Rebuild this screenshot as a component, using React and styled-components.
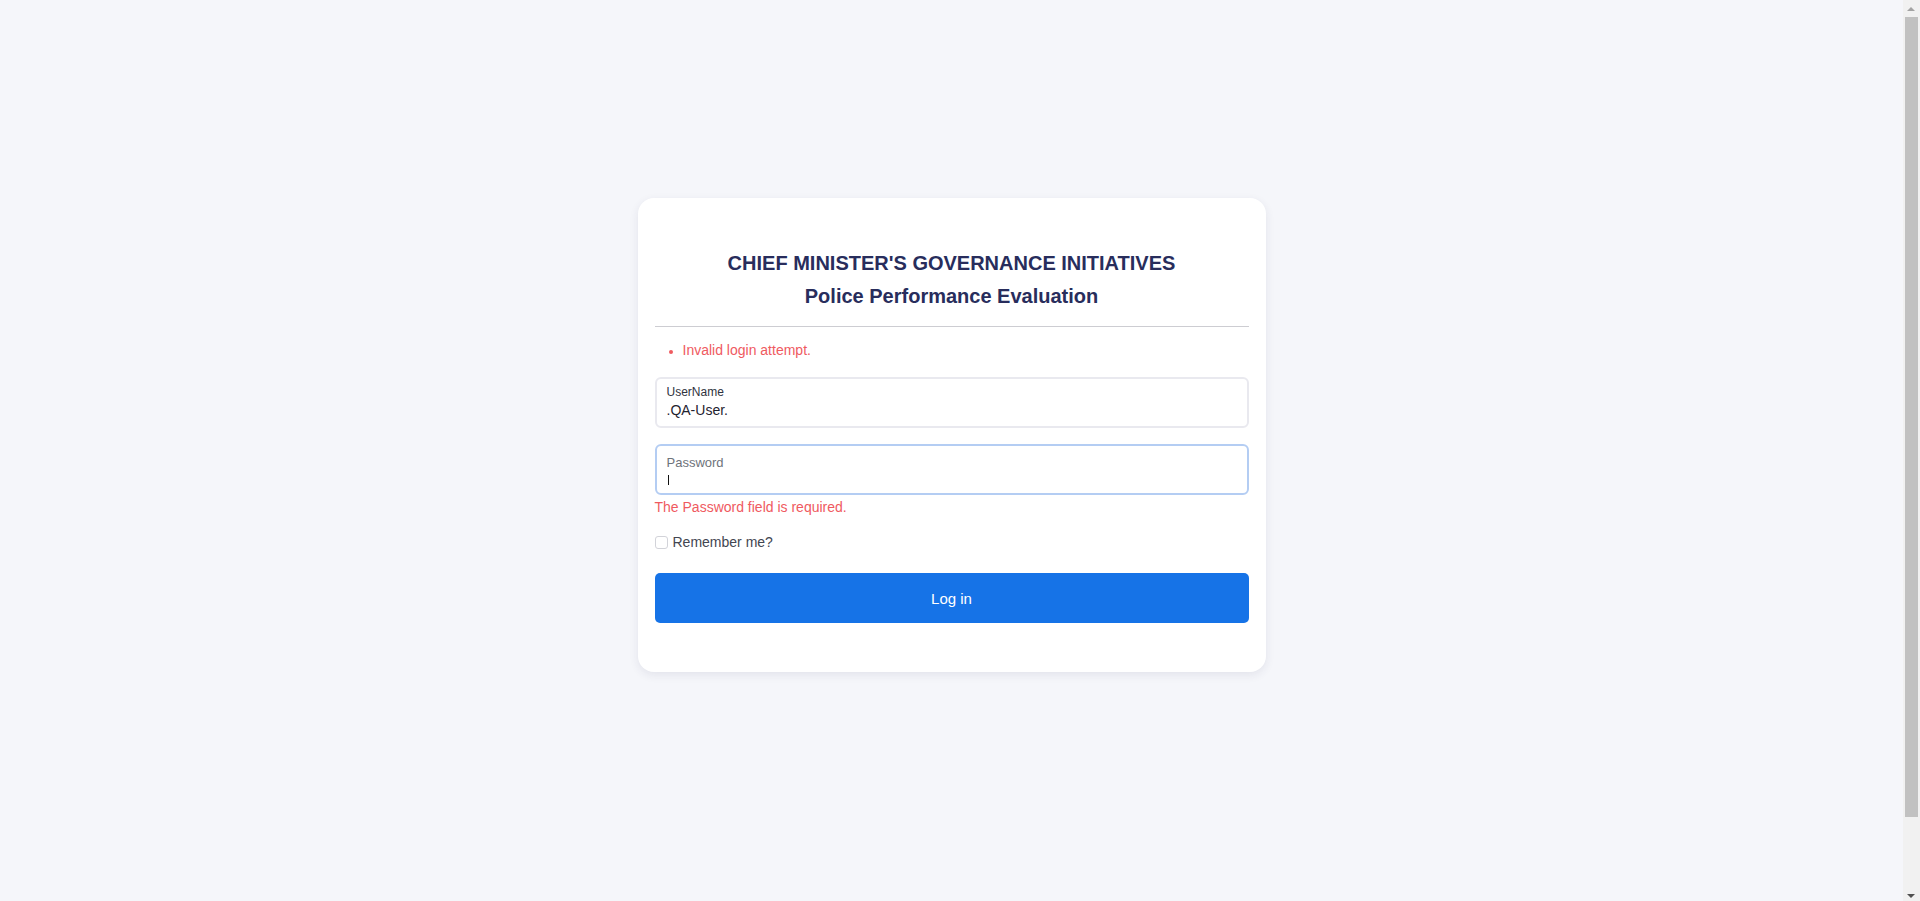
import React from "react";
import styled, { createGlobalStyle } from "styled-components";

const GlobalStyle = createGlobalStyle`
  html, body {
    margin: 0;
    padding: 0;
    background: #f5f6fa;
    font-family: "Liberation Sans", Arial, sans-serif;
    overflow: hidden;
  }
  * { box-sizing: border-box; }
`;

const Page = styled.div`
  display: flex;
  justify-content: center;
  align-items: flex-start;
  min-height: 100vh;
  padding: 198px 17px 0 0;
`;

const Card = styled.form`
  width: 628px;
  background: #ffffff;
  border-radius: 16px;
  box-shadow: 0 3px 10px rgba(40, 45, 90, 0.09);
  padding: 53px 17px 49px;
  display: flex;
  flex-direction: column;
`;

const Header = styled.header`
  text-align: center;
  color: #282d5c;
  padding-bottom: 18px;
  border-bottom: 1px solid #cdcdd2;
`;

const Title = styled.h1`
  margin: 0;
  font-size: 20px;
  font-weight: 700;
  line-height: 24px;
`;

const Subtitle = styled.h2`
  margin: 9px 0 0;
  font-size: 20px;
  font-weight: 700;
  line-height: 24px;
`;

const ErrorList = styled.ul`
  margin: 13px 0 17px;
  padding-left: 28px;
  color: #ef5a5f;
  font-size: 14px;
  line-height: 20px;

  li::marker {
    font-size: 12px;
  }
`;

const Field = styled.div`
  position: relative;
  height: 51px;
  border: 2px solid ${(p) => (p.$focused ? "#b4cdf3" : "#e9e9ef")};
  border-radius: 6px;
  background: #fff;
  padding: 5px 10px 0;
  display: flex;
  flex-direction: column;
`;

const FieldLabel = styled.label`
  font-size: ${(p) => (p.$muted ? 13 : 12)}px;
  line-height: 16px;
  margin-top: ${(p) => (p.$muted ? 4 : 0)}px;
  color: ${(p) => (p.$muted ? "#6e737a" : "#2f3340")};
`;

const FieldInput = styled.input`
  border: none;
  outline: none;
  padding: 0;
  margin: 0;
  background: transparent;
  font-family: "Liberation Sans", Arial, sans-serif;
  font-size: 14px;
  line-height: 20px;
  height: 20px;
  color: #1f2330;
  caret-color: transparent;
`;

const Caret = styled.span`
  position: absolute;
  left: 11px;
  top: 29px;
  width: 1px;
  height: 10px;
  background: #111;
`;

const FieldError = styled.div`
  margin-top: 4px;
  color: #ef5a5f;
  font-size: 14px;
  line-height: 16px;
`;

const Spacer = styled.div`
  height: ${(p) => p.$h}px;
`;

const CheckRow = styled.label`
  display: flex;
  align-items: center;
  gap: 5px;
  font-size: 14px;
  color: #434651;
  line-height: 18px;
`;

const CheckBox = styled.span`
  width: 13px;
  height: 13px;
  border: 1px solid #d2d3d9;
  border-radius: 3px;
  background: #fff;
`;

const SubmitButton = styled.button`
  margin-top: 22px;
  height: 50px;
  width: 100%;
  border: none;
  border-radius: 5px;
  background: #1673e7;
  color: #ffffff;
  font-family: "Liberation Sans", Arial, sans-serif;
  font-size: 15px;
`;

/* Fake browser scrollbar, drawn over the right edge of the page */
const ScrollTrack = styled.div`
  position: fixed;
  top: 0;
  right: 0;
  width: 17px;
  height: 100vh;
  background: #f1f1f1;
`;

const ScrollThumb = styled.div`
  position: absolute;
  left: 2px;
  top: 17px;
  width: 13px;
  height: 800px;
  background: #c1c1c1;
`;

const Arrow = styled.div`
  position: absolute;
  left: 4px;
  width: 0;
  height: 0;
  border-left: 4px solid transparent;
  border-right: 4px solid transparent;
  ${(p) =>
    p.$down
      ? `bottom: 3px; border-top: 4px solid #505050;`
      : `top: 7px; border-bottom: 4px solid #a3a3a3;`}
`;

export default function App() {
  return (
    <>
      <GlobalStyle />
      <Page>
        <Card onSubmit={(e) => e.preventDefault()}>
          <Header>
            <Title>CHIEF MINISTER'S GOVERNANCE INITIATIVES</Title>
            <Subtitle>Police Performance Evaluation</Subtitle>
          </Header>
          <ErrorList>
            <li>Invalid login attempt.</li>
          </ErrorList>
          <Field>
            <FieldLabel>UserName</FieldLabel>
            <FieldInput readOnly value=".QA-User." />
          </Field>
          <Spacer $h={16} />
          <Field $focused>
            <FieldLabel $muted>Password</FieldLabel>
            <FieldInput readOnly type="password" value="" />
            <Caret />
          </Field>
          <FieldError>The Password field is required.</FieldError>
          <Spacer $h={18} />
          <CheckRow>
            <CheckBox />
            Remember me?
          </CheckRow>
          <SubmitButton type="submit">Log in</SubmitButton>
        </Card>
      </Page>
      <ScrollTrack aria-hidden="true">
        <Arrow />
        <ScrollThumb />
        <Arrow $down />
      </ScrollTrack>
    </>
  );
}
